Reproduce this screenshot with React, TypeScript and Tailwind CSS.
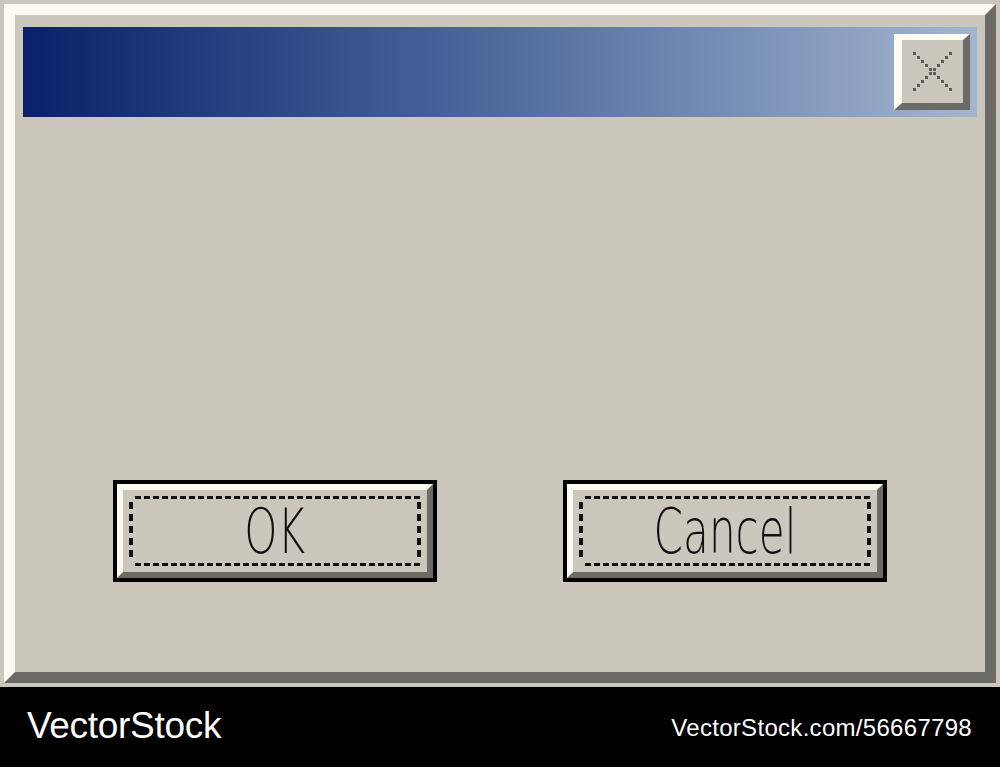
import React from "react";

const FACE = "#cbc7bc";

function CloseGlyph() {
  // dotted X made of small squares
  const dots = Array.from({ length: 10 }, (_, i) => i * 4);
  return (
    <svg width="39" height="39" viewBox="0 0 39 39">
      {dots.map((d) => (
        <rect key={`a${d}`} x={d} y={d} width="3" height="3" fill="#5f5e5a" />
      ))}
      {dots.map((d) => (
        <rect key={`b${d}`} x={36 - d} y={d} width="3" height="3" fill="#5f5e5a" />
      ))}
    </svg>
  );
}

function FocusRing() {
  return (
    <svg className="absolute inset-[6px]" width="292" height="70" viewBox="0 0 292 70">
      <g stroke="#111" fill="none">
        <line x1="6" y1="1.5" x2="292" y2="1.5" strokeWidth="3" strokeDasharray="6 3" />
        <line x1="6" y1="68.5" x2="292" y2="68.5" strokeWidth="3" strokeDasharray="6 3" />
        <line x1="2" y1="6" x2="2" y2="66" strokeWidth="4" strokeDasharray="7 5" />
        <line x1="290" y1="6" x2="290" y2="66" strokeWidth="4" strokeDasharray="7 5" />
      </g>
    </svg>
  );
}

function DialogButton({ label }: { label: string }) {
  return (
    <div className="w-[324px] h-[102px] border-4 border-black">
      <div className="relative w-full h-full bg-[#cbc7bc] border-[6px] border-t-[#fdfaf1] border-l-[#fdfaf1] border-b-[#6b6a66] border-r-[#6b6a66] flex items-center justify-center">
        <FocusRing />
        <span
          className="text-[62px] leading-none text-[#111] font-extralight scale-x-[0.68] mt-[2px]"
          style={{ fontFamily: '"DejaVu Sans", "Liberation Sans", sans-serif' }}
        >
          {label}
        </span>
      </div>
    </div>
  );
}

export default function App() {
  return (
    <div className="w-[1000px] h-[767px] flex flex-col" style={{ background: FACE }}>
      <div className="h-[687px] p-1">
        <div className="h-full bg-[#cbc7bc] border-[11px] border-t-[#fdfaf1] border-l-[#fdfaf1] border-b-[#6b6a66] border-r-[#6b6a66] px-2 pt-3">
          <div className="h-[90px] bg-gradient-to-r from-[#0b1f6a] to-[#a3b6cf] flex items-center justify-end pr-[7px]">
            <div className="w-[76px] h-[76px] bg-[#cbc7bc] border-t-[6px] border-l-[8px] border-b-[7px] border-r-[7px] border-t-[#fdfaf1] border-l-[#fdfaf1] border-b-[#6b6a66] border-r-[#6b6a66] flex items-center justify-center">
              <CloseGlyph />
            </div>
          </div>
          <div className="mt-[363px] flex justify-center gap-[126px]">
            <DialogButton label="OK" />
            <DialogButton label="Cancel" />
          </div>
        </div>
      </div>
      <div
        className="flex-1 bg-black flex items-center justify-between pl-[27px] pr-[28px] text-white"
        style={{ fontFamily: '"Liberation Sans", Arial, sans-serif' }}
      >
        <span className="text-[37px] tracking-[-0.3px] mt-[-2px]">VectorStock</span>
        <span className="text-[24px] tracking-[0.3px] mt-[2px]">VectorStock.com/56667798</span>
      </div>
    </div>
  );
}
